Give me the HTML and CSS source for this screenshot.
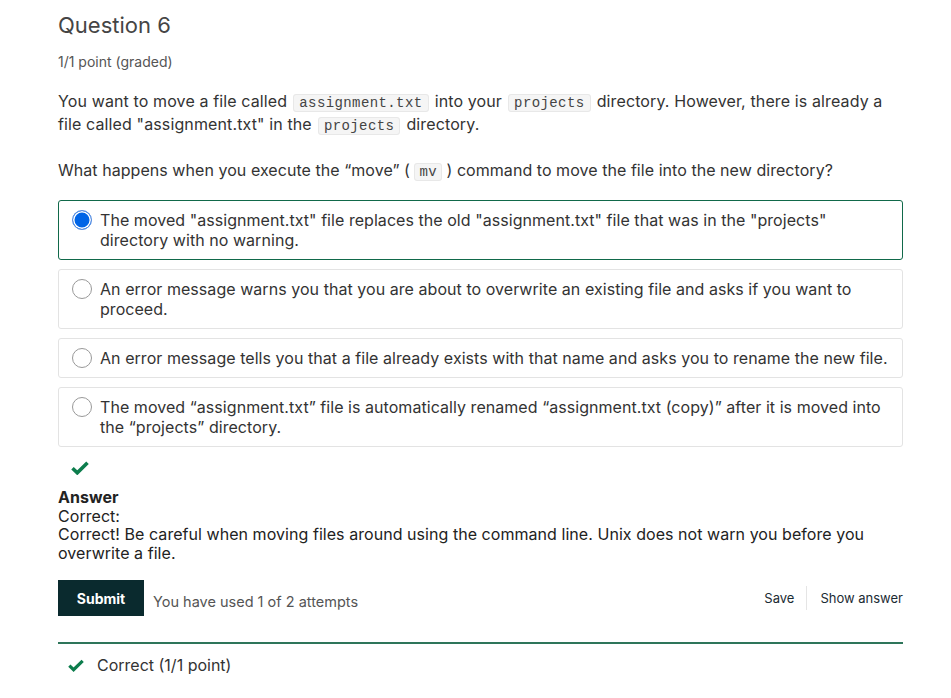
FILE: index.html
```html
<!DOCTYPE html>
<html>
<head>
<meta charset="utf-8">
<link rel="stylesheet" href="styles.css">
</head>
<body>
<div class="problem">
  <h2 class="title">Question 6</h2>
  <div class="points">1/1 point (graded)</div>
  <p class="para intro">You want to move a file called <code class="wide">assignment.txt</code> into your <code class="wide">projects</code> directory. However, there is already a file called "assignment.txt" in the <code class="wide">projects</code> directory.</p>
  <p class="para q">What happens when you execute the “move” ( <code>mv</code> ) command to move the file into the new directory?</p>
  <div class="options">
    <label class="opt selected"><span class="radio checked"></span><span class="txt">The moved "assignment.txt" file replaces the old "assignment.txt" file that was in the "projects" directory with no warning.</span></label>
    <label class="opt"><span class="radio"></span><span class="txt">An error message warns you that you are about to overwrite an existing file and asks if you want to proceed.</span></label>
    <label class="opt"><span class="radio"></span><span class="txt">An error message tells you that a file already exists with that name and asks you to rename the new file.</span></label>
    <label class="opt"><span class="radio"></span><span class="txt">The moved “assignment.txt” file is automatically renamed “assignment.txt (copy)” after it is moved into the “projects” directory.</span></label>
  </div>
  <div class="status-icon"><svg width="18" height="14" viewBox="0 0 18 14"><path d="M1.5 7.2 L6.3 11.8 L16.5 1.8" fill="none" stroke="#0d7d4d" stroke-width="3.6" stroke-linejoin="miter"/></svg></div>
  <div class="answer">
    <div class="ans-h">Answer</div>
    <div>Correct:</div>
    <div>Correct! Be careful when moving files around using the command line. Unix does not warn you before you overwrite a file.</div>
  </div>
  <div class="actions">
    <button class="submit">Submit</button>
    <span class="attempts">You have used 1 of 2 attempts</span>
    <div class="right">
      <button class="link">Save</button>
      <span class="sep"></span>
      <button class="link">Show answer</button>
    </div>
  </div>
  <div class="notice">
    <svg width="16" height="13" viewBox="0 0 18 14"><path d="M1.5 7.2 L6.3 11.8 L16.5 1.8" fill="none" stroke="#0d7d4d" stroke-width="3.6"/></svg>
    <span>Correct (1/1 point)</span>
  </div>
</div>
</body>
</html>
```
FILE: styles.css
```css
* { box-sizing: border-box; }
body {
  margin: 0;
  background: #fff;
  font-family: Inter, "Noto Sans", sans-serif;
  color: #333;
}
.problem {
  width: 845px;
  margin-left: 58px;
  padding-top: 11px;
}
.title {
  margin: 0;
  font-size: 22px;
  font-weight: 400;
  color: #454545;
  line-height: 28px;
}
.points {
  margin-top: 14px;
  font-size: 14px;
  color: #555;
  line-height: 18px;
}
.para {
  margin: 19px 0 0;
  font-size: 16px;
  letter-spacing: 0.05px;
  line-height: 23px;
  color: #333;
}
.para.intro {
  padding-right: 12px;
  letter-spacing: 0.12px;
}
.para.q { margin-top: 23px; }
code {
  font-family: "Liberation Mono", "DejaVu Sans Mono", monospace;
  font-size: 14px;
  line-height: 16px;
  letter-spacing: 0.3px;
  background: #f5f5f5;
  border: 1px solid #e8e8e8;
  border-radius: 3px;
  padding: 0 4px;
  color: #444;
  font-weight: 400;
}
code.wide {
  letter-spacing: 0.4px;
  padding: 0 5px;
  margin: 0 1.5px;
}
.options {
  margin-top: 18px;
  display: flex;
  flex-direction: column;
  gap: 9px;
}
.opt {
  display: flex;
  align-items: flex-start;
  border: 1px solid #e3e3e3;
  border-radius: 3px;
  padding: 9px 8px 9px 13px;
  font-size: 16px;
  letter-spacing: 0.05px;
  line-height: 20px;
  color: #333;
}
.opt.selected { border-color: #11694a; }
.radio {
  flex: none;
  width: 20px;
  height: 20px;
  border-radius: 50%;
  border: 1px solid #999;
  background: #fff;
  margin: 0 8px 0 0;
}
.radio.checked {
  background: #0064e6;
  border: 1px solid #5b8fe0;
  box-shadow: inset 0 0 0 1.5px #fff;
}
.status-icon {
  margin: 14px 0 0 13px;
  height: 14px;
}
.status-icon svg { display: block; }
.answer {
  margin-top: 13px;
  font-size: 16px;
  letter-spacing: 0.05px;
  line-height: 18.5px;
  color: #222;
}
.ans-h { font-weight: 700; }
.actions {
  display: flex;
  align-items: center;
  margin-top: 18px;
}
.submit {
  background: #0a2a2e;
  color: #fff;
  border: none;
  font-family: Inter, sans-serif;
  font-weight: 700;
  font-size: 14px;
  height: 36px;
  width: 86px;
  padding: 0;
  border-radius: 0;
}
.attempts {
  margin-left: 9px;
  margin-top: 7px;
  font-size: 14.5px;
  color: #555;
}
.right {
  margin-left: auto;
  display: flex;
  align-items: center;
}
.link {
  background: none;
  border: none;
  font-family: Inter, sans-serif;
  font-size: 13px;
  color: #1b2b33;
  padding: 0;
}
.sep {
  width: 1px;
  height: 24px;
  background: #e5e5e5;
  margin: 0 13px 0 12px;
}
.notice {
  margin-top: 26px;
  border-top: 2px solid #2e755a;
  display: flex;
  align-items: center;
  padding: 11px 0 0 10px;
  font-size: 16px;
  color: #333;
}
.notice svg { margin-right: 13px; }
```
